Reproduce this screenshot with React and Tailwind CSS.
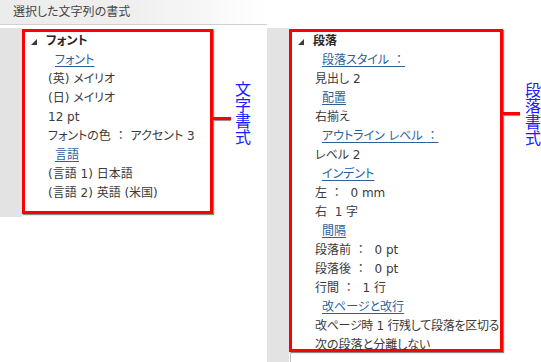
const FONT = `"DejaVu Sans", "Noto Sans CJK JP", sans-serif`

const CHAR_ROWS = [
  { kind: 'head', text: 'フォント' },
  { kind: 'link', text: 'フォント' },
  { kind: 'text', text: '(英) メイリオ' },
  { kind: 'text', text: '(日) メイリオ' },
  { kind: 'text', text: '12 pt' },
  { kind: 'text', text: 'フォントの色 ： アクセント 3' },
  { kind: 'link', text: '言語' },
  { kind: 'text', text: '(言語 1) 日本語' },
  { kind: 'text', text: '(言語 2) 英語 (米国)' },
]

const PARA_ROWS = [
  { kind: 'head', text: '段落' },
  { kind: 'link', text: '段落スタイル ：' },
  { kind: 'text', text: '見出し 2' },
  { kind: 'link', text: '配置' },
  { kind: 'text', text: '右揃え' },
  { kind: 'link', text: 'アウトライン レベル ：' },
  { kind: 'text', text: 'レベル 2' },
  { kind: 'link', text: 'インデント' },
  { kind: 'text', text: '左 ：  0 mm' },
  { kind: 'text', text: '右  1 字' },
  { kind: 'link', text: '間隔' },
  { kind: 'text', text: '段落前 ：  0 pt' },
  { kind: 'text', text: '段落後 ：  0 pt' },
  { kind: 'text', text: '行間 ：  1 行' },
  { kind: 'link', text: '改ページと改行' },
  { kind: 'text', text: '改ページ時 1 行残して段落を区切る', tight: true },
  { kind: 'text', text: '次の段落と分離しない' },
]

// full-width colon keeps its full width (palt would squeeze it)
function withColons(text) {
  const parts = text.split('：')
  return parts.flatMap((p, i) =>
    i === 0 ? [p] : [<span key={i} className="[font-feature-settings:normal]">：</span>, p]
  )
}

function Row({ row }) {
  if (row.kind === 'head') {
    return (
      <div className="flex items-center h-[19px] pl-[6px]">
        <svg width="6" height="6" viewBox="0 0 6 6" className="mr-[9px]">
          <polygon points="6,0 6,6 0,6" fill="#3a3a3a" />
        </svg>
        <span className="font-bold text-[#262626]">{row.text}</span>
      </div>
    )
  }
  if (row.kind === 'link') {
    return (
      <div className="h-[19px] pl-[30px] whitespace-pre">
        <span className="text-[#2d5f9a] underline underline-offset-[2px] decoration-[#2d5f9a]">{withColons(row.text)}</span>
      </div>
    )
  }
  return (
    <div className={`h-[19px] pl-[23px] text-[#3a3a3a] whitespace-pre ${row.tight ? 'tracking-[-0.3px]' : ''}`}>
      {withColons(row.text)}
    </div>
  )
}

function Pane({ rows, className }) {
  return (
    <div className={`bg-white border-[3px] border-[#ff0000] shadow-[1px_1px_1px_#8a8a8a] leading-[19px] ${className}`}>
      {rows.map((r, i) => <Row key={i} row={r} />)}
    </div>
  )
}

function Label({ text, className }) {
  return (
    <div className={`[writing-mode:vertical-rl] text-[16px] leading-[17px] text-[#1a1aff] ${className}`}>
      {text}
    </div>
  )
}

function Connector({ className }) {
  return <div className={`h-[3px] bg-[#ff0000] shadow-[0_1px_1px_#8a8a8a] ${className}`} />
}

export default function App() {
  return (
    <div className="w-[541px] h-[362px] bg-white flex overflow-hidden text-[12px] [font-feature-settings:'palt']" style={{ fontFamily: FONT }}>
      {/* left: character formatting */}
      <div className="w-[267px] flex flex-col">
        <div className="h-[25px] pl-[13px] flex items-center text-[#444] bg-gradient-to-r from-[#ececec] via-[#efefef] to-white border-b border-[#cfcfcf]">
          選択した文字列の書式
        </div>
        <div className="flex mt-[3px]">
          <div className="w-[22px] h-[189px] bg-[#e3e3e3]" />
          <Pane rows={CHAR_ROWS} className="w-[191px] h-[185px] mt-[1px]" />
          <Connector className="w-[18px] mt-[89px]" />
          <Label text="文字書式" className="ml-[2px] mt-[53px]" />
        </div>
      </div>

      {/* right: paragraph formatting */}
      <div className="flex-1 flex pt-[28px]">
        <div className="w-[22px] bg-[#e3e3e3]" />
        <div className="flex flex-col">
          <Pane rows={PARA_ROWS} className="w-[214px] h-[323px] mt-[1px]" />
          <div className="flex-1 border-l border-[#bdbdbd] ml-[1px]" />
        </div>
        <Connector className="w-[17px] mt-[84px]" />
        <Label text="段落書式" className="ml-[3px] mt-[54px]" />
      </div>
    </div>
  )
}
